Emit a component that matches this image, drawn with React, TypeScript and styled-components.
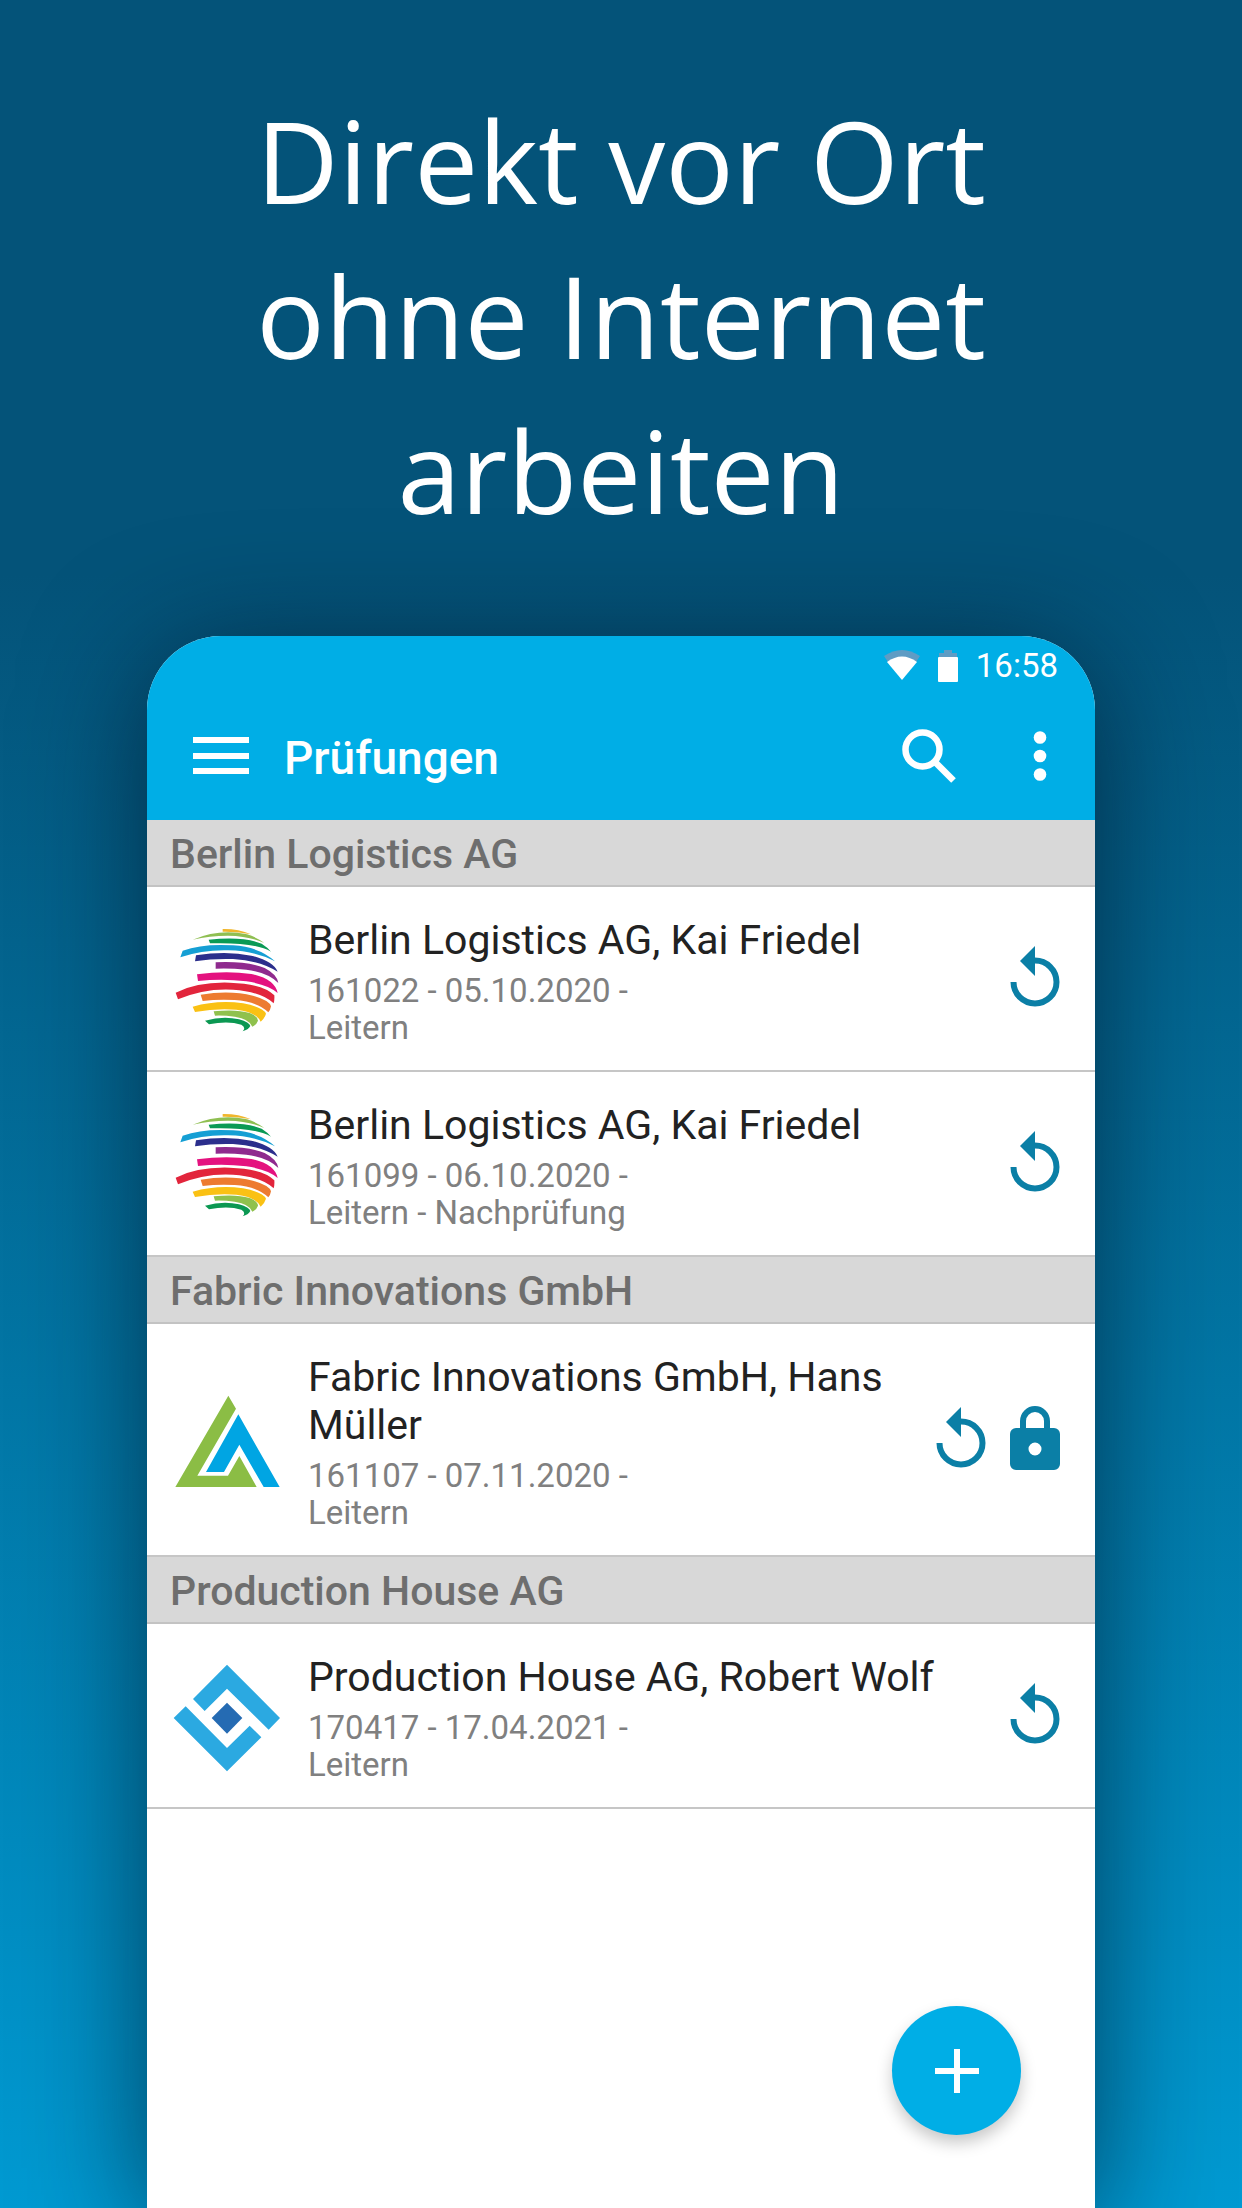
import React from 'react';
import styled, { createGlobalStyle } from 'styled-components';

const GlobalStyle = createGlobalStyle`
  *, *::before, *::after { box-sizing: border-box; }
  body { margin: 0; font-family: Roboto, "Liberation Sans", sans-serif; }
  button { border: 0; padding: 0; margin: 0; background: none; color: inherit; font: inherit; cursor: pointer; }
`;

const Page = styled.main`
  display: flex;
  flex-direction: column;
  min-height: 100vh;
  overflow: hidden;
  background: linear-gradient(180deg, #045379 0%, #045379 26%, #009ad2 100%);
`;

const Headline = styled.h1`
  width: 62%;
  margin: 0 auto;
  padding: 82px 0 89px;
  font: 400 114px/155px "Open Sans", "Noto Sans", sans-serif;
  color: #fff;
  text-align: center;
`;

const Phone = styled.section`
  display: flex;
  flex: 1;
  flex-direction: column;
  position: relative;
  width: calc(100% - 294px);
  margin: 0 auto;
  border-radius: 74px 74px 0 0;
  background: #fff;
  box-shadow: 0 16px 120px rgba(0, 20, 36, 0.66);
`;

const Header = styled.header`
  border-radius: 74px 74px 0 0;
  background: #00aee6;
  color: #fff;
`;

const StatusBar = styled.div`
  display: flex;
  align-items: center;
  justify-content: flex-end;
  gap: 18px;
  height: 60px;
  padding-right: 37px;
  font-size: 33px;
  line-height: 60px;
`;

const StatusIcons = styled.span`
  display: flex;
  gap: 18px;
`;

const Toolbar = styled.div`
  display: flex;
  align-items: center;
  height: 124px;
  padding: 0 36px 0 43px;
`;

const IconButton = styled.button`
  display: flex;
  align-items: center;
  justify-content: center;
  height: 72px;
  padding-bottom: 4px;
  width: ${(p: { $width: number }) => p.$width}px;
`;

const ScreenTitle = styled.h2`
  flex: 1;
  margin: 0;
  padding-left: 32px;
  font-size: 46px;
  font-weight: 500;
  line-height: 56px;
`;

const ToolbarActions = styled.div`
  display: flex;
  gap: 56px;
`;

const GroupTitle = styled.h3`
  height: 67px;
  margin: 0;
  padding: 0 23px;
  border-bottom: 2px solid #c3c3c3;
  background: #d8d8d8;
  color: #6e6e6e;
  font-size: 41px;
  font-weight: 500;
  line-height: 68px;
`;

const List = styled.ul`
  margin: 0;
  padding: 0;
  list-style: none;
`;

const Row = styled.li`
  display: flex;
  align-items: center;
  gap: 25px;
  padding: 29px 35px 24px 26px;
  border-bottom: 2px solid #c6c6c6;
`;

const Body = styled.div`
  flex: 1;
  min-width: 0;
`;

const Name = styled.h4`
  margin: 0 0 8px;
  color: #222;
  font-size: 41px;
  font-weight: 400;
  line-height: 48px;
`;

const Meta = styled.p`
  margin: 0;
  color: #808080;
  font-size: 33px;
  line-height: 37px;
`;

const Actions = styled.div`
  display: flex;
  align-items: center;
  gap: 24px;
  padding-bottom: 8px;
`;

const ActionButton = styled.button`
  display: flex;
  color: #0b7fa6;
`;

const AddButton = styled.button`
  position: absolute;
  right: 74px;
  bottom: 73px;
  display: flex;
  align-items: center;
  justify-content: center;
  width: 129px;
  height: 129px;
  border-radius: 50%;
  background: #00aee6;
  box-shadow: 0 8px 16px rgba(0, 0, 0, 0.22);
`;

const GlobeLogo = () => (
  <svg width="110" height="110" viewBox="40 45 330 330" aria-hidden="true">
    <path fill="#f0b62c" d="M189 54Q235 53 274 70Q235 61 189 62Z" />
    <path fill="#8fbf52" d="M99 86Q180 52 262 70Q290 78 314 96Q270 75 205 74Q150 74 99 86Z" />
    <path fill="#0a9a55" d="M147 86Q250 75 306 98Q325 110 334 122Q285 93 151 97Z" />
    <path fill="#159fd4" d="M69 119Q130 97 220 103Q300 108 346 151Q290 120 205 118Q130 116 62 139Z" />
    <path fill="#2b2e8c" d="M109 133Q200 118 275 134Q340 150 354 182Q300 148 220 144Q160 142 106 151Z" />
    <path fill="#8f2a8e" d="M168 154Q265 150 315 171Q352 190 356 216Q325 184 260 176Q210 171 168 173Z" />
    <path fill="#e4127f" d="M112 190Q200 178 275 189Q345 204 354 246Q325 220 260 211Q190 202 115 210Z" />
    <path fill="#e2253c" d="M48 245Q115 212 210 215Q310 218 344 253Q345 266 342 277Q305 242 220 236Q135 231 55 265Z" />
    <path fill="#ed7b30" d="M123 251Q210 237 280 254Q330 268 334 286Q332 298 326 304Q295 272 225 267Q175 264 129 270Z" />
    <path fill="#fac114" d="M99 287Q175 266 250 277Q310 288 319 308Q314 324 303 332Q290 303 230 296Q170 291 106 303Z" />
    <path fill="#8fc14d" d="M162 301Q230 294 270 306Q295 316 295 329Q290 342 278 347Q270 324 225 317Q195 313 166 314Z" />
    <path fill="#0b9852" d="M136 329Q190 314 238 325Q270 334 272 345Q266 356 249 361Q260 350 245 341Q205 329 148 340Z" />
  </svg>
);

const TriangleLogo = () => (
  <svg width="110" height="110" viewBox="40 45 330 330" aria-hidden="true">
    <path fill="#8bbd45" d="M206 71L229 110L113 311H205L239 252L291 345H47Z" />
    <path fill="#00a5e3" d="M236 127L360 345H312L239 218L193 300H139Z" />
  </svg>
);

const DiamondLogo = () => (
  <svg width="110" height="110" viewBox="40 66 330 330" aria-hidden="true">
    <path fill="#2ba9e1" d="M202 71L361 231L327 266L202 143L135 210L100 174Z" />
    <path fill="#2ba9e1" d="M78 196L202 321L270 254L305 289L202 391L42 231Z" />
    <path fill="#256bb3" d="M202 185L248 231L202 278L156 231Z" />
  </svg>
);

const RetryIcon = () => (
  <svg width="50" height="62" viewBox="0 0 50 62" aria-hidden="true">
    <path fill="none" stroke="currentColor" strokeWidth="6" d="M3.500 36A21.500 21.500 0 1 0 25 14.500" />
    <path fill="currentColor" d="M10 15L25 0V30Z" />
  </svg>
);

const LockIcon = () => (
  <svg width="50" height="65" viewBox="0 0 50 65" aria-hidden="true">
    <path fill="none" stroke="currentColor" strokeWidth="6" d="M13 24V15A12 12 0 0 1 37 15V24" />
    <path
      fill="currentColor"
      fillRule="evenodd"
      d="M6 22H44A6 6 0 0 1 50 28V58A6 6 0 0 1 44 64H6A6 6 0 0 1 0 58V28A6 6 0 0 1 6 22ZM25 36.500A6.500 6.500 0 1 0 25 49.500A6.500 6.500 0 1 0 25 36.500Z"
    />
  </svg>
);

const MenuIcon = () => (
  <svg width="56" height="38" viewBox="0 0 56 38" fill="#fff" aria-hidden="true">
    <path d="M0 0H56V6H0ZM0 16H56V22H0ZM0 31H56V37H0Z" />
  </svg>
);

const SearchIcon = () => (
  <svg width="54" height="54" viewBox="0 0 54 54" fill="none" stroke="#fff" aria-hidden="true">
    <circle cx="20.500" cy="20.500" r="17" strokeWidth="6.500" />
    <path strokeWidth="6.500" d="M34 34L51.500 51.500" />
  </svg>
);

const MoreIcon = () => (
  <svg width="14" height="50" viewBox="0 0 14 50" fill="#fff" aria-hidden="true">
    <circle cx="7" cy="6.500" r="6.300" />
    <circle cx="7" cy="25" r="6.300" />
    <circle cx="7" cy="43.500" r="6.300" />
  </svg>
);

const WifiIcon = () => (
  <svg width="36" height="30" viewBox="0 0 36 30" aria-hidden="true">
    <path fill="#5f9cc4" d="M0 6Q18 -6 36 6L32 12H4Z" />
    <path fill="#fff" d="M3 12Q18 1 33 12L18 30Z" />
  </svg>
);

const BatteryIcon = () => (
  <svg width="20" height="32" viewBox="0 0 20 32" aria-hidden="true">
    <path fill="#5f9cc4" d="M6 0H14V3H19V8H1V3H6Z" />
    <rect y="7" width="20" height="25" rx="1" fill="#fff" />
  </svg>
);

const PlusIcon = () => (
  <svg width="44" height="44" viewBox="0 0 44 44" fill="#fff" aria-hidden="true">
    <path d="M19 0H25V19H44V25H25V44H19V25H0V19H19Z" />
  </svg>
);

type Inspection = { name: string; number: string; type: string; locked?: boolean };
type Group = { company: string; Logo: React.FC; items: Inspection[] };

const groups: Group[] = [
  {
    company: 'Berlin Logistics AG',
    Logo: GlobeLogo,
    items: [
      { name: 'Berlin Logistics AG, Kai Friedel', number: '161022 - 05.10.2020 -', type: 'Leitern' },
      { name: 'Berlin Logistics AG, Kai Friedel', number: '161099 - 06.10.2020 -', type: 'Leitern - Nachprüfung' },
    ],
  },
  {
    company: 'Fabric Innovations GmbH',
    Logo: TriangleLogo,
    items: [
      { name: 'Fabric Innovations GmbH, Hans Müller', number: '161107 - 07.11.2020 -', type: 'Leitern', locked: true },
    ],
  },
  {
    company: 'Production House AG',
    Logo: DiamondLogo,
    items: [{ name: 'Production House AG, Robert Wolf', number: '170417 - 17.04.2021 -', type: 'Leitern' }],
  },
];

export default function App() {
  return (
    <>
      <GlobalStyle />
      <Page>
        <Headline>Direkt vor Ort ohne Internet arbeiten</Headline>
        <Phone>
          <Header>
            <StatusBar>
              <StatusIcons>
                <WifiIcon />
                <BatteryIcon />
              </StatusIcons>
              <time>16:58</time>
            </StatusBar>
            <Toolbar>
              <IconButton $width={62} aria-label="Menü">
                <MenuIcon />
              </IconButton>
              <ScreenTitle>Prüfungen</ScreenTitle>
              <ToolbarActions>
                <IconButton $width={72} aria-label="Suchen">
                  <SearchIcon />
                </IconButton>
                <IconButton $width={38} aria-label="Mehr">
                  <MoreIcon />
                </IconButton>
              </ToolbarActions>
            </Toolbar>
          </Header>
          {groups.map(({ company, Logo, items }) => (
            <React.Fragment key={company}>
              <GroupTitle>{company}</GroupTitle>
              <List>
                {items.map((item) => (
                  <Row key={item.number}>
                    <Logo />
                    <Body>
                      <Name>{item.name}</Name>
                      <Meta>
                        {item.number}
                        <br />
                        {item.type}
                      </Meta>
                    </Body>
                    <Actions>
                      <ActionButton aria-label="Zurücksetzen">
                        <RetryIcon />
                      </ActionButton>
                      {item.locked && (
                        <ActionButton aria-label="Gesperrt">
                          <LockIcon />
                        </ActionButton>
                      )}
                    </Actions>
                  </Row>
                ))}
              </List>
            </React.Fragment>
          ))}
          <AddButton aria-label="Neue Prüfung">
            <PlusIcon />
          </AddButton>
        </Phone>
      </Page>
    </>
  );
}
